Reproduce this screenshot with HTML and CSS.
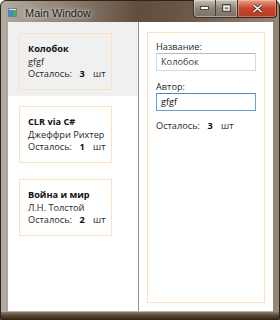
FILE: index.html
```html
<!DOCTYPE html>
<html lang="ru">
<head>
    <meta charset="UTF-8">
    <meta name="viewport" content="width=device-width, initial-scale=1.0">
    <title>Main Window</title>
    <link rel="stylesheet" href="styles.css">
</head>
<body>
    <div class="window">
        <div class="titlebar">
            <svg class="app-icon" width="9" height="9" viewBox="0 0 9 9">
                <rect x="0.5" y="0.5" width="8" height="8" fill="#e8eef4" stroke="#6f7f90"/>
                <rect x="1" y="2" width="4" height="6" fill="#3a8fd0"/>
                <rect x="5" y="2" width="3" height="6" fill="#5aa84a"/>
            </svg>
            <span class="title">Main Window</span>
            <div class="caption">
                <div class="caption-group">
                    <span class="cbtn">
                        <svg width="9" height="4" viewBox="0 0 9 4"><rect x="0.5" y="0.5" width="8" height="3" fill="#fff" stroke="#4a4a4a"/></svg>
                    </span>
                    <span class="cbtn">
                        <svg width="9" height="8" viewBox="0 0 9 8"><rect x="0.5" y="0.5" width="8" height="7" fill="none" stroke="#4a4a4a"/><rect x="2" y="2.5" width="5" height="3.5" fill="none" stroke="#fff" stroke-width="1.2"/></svg>
                    </span>
                </div>
                <span class="cbtn close">
                    <svg width="11" height="9" viewBox="0 0 11 9"><path d="M1.5 1 L9.5 8 M9.5 1 L1.5 8" stroke="#4a2a22" stroke-width="3"/><path d="M1.5 1 L9.5 8 M9.5 1 L1.5 8" stroke="#fff" stroke-width="1.6"/></svg>
                </span>
            </div>
        </div>
        <div class="client">
            <div class="book-list">
                <div class="item selected">
                    <div class="card">
                        <div class="name">Колобок</div>
                        <div>gfgf</div>
                        <div class="count">Осталось: <b>3</b> шт</div>
                    </div>
                </div>
                <div class="item">
                    <div class="card">
                        <div class="name">CLR via C#</div>
                        <div>Джеффри Рихтер</div>
                        <div class="count">Осталось: <b>1</b> шт</div>
                    </div>
                </div>
                <div class="item">
                    <div class="card">
                        <div class="name">Война и мир</div>
                        <div>Л.Н. Толстой</div>
                        <div class="count">Осталось: <b>2</b> шт</div>
                    </div>
                </div>
            </div>
            <div class="details">
                <div class="panel">
                    <div class="label">Название:</div>
                    <div class="textbox">Колобок</div>
                    <div class="label">Автор:</div>
                    <div class="textbox focused">gfgf</div>
                    <div class="count">Осталось: <b>3</b> шт</div>
                </div>
            </div>
        </div>
    </div>
</body>
</html>
```

FILE: styles.css
```css
body {
    margin: 0;
    font-family: "Open Sans", "Liberation Sans", sans-serif;
    font-size: 9.2px;
    color: #262626;
}
.window {
    width: 280px;
    height: 320px;
    box-sizing: border-box;
    padding: 0 6px 7px 7px;
    display: flex;
    flex-direction: column;
    background: linear-gradient(90deg, #b3aaa1 0%, #8c7d70 25%, #614c3d 50%, #6e5b4c 70%, #958879 100%);
    border: 1px solid #2e2418;
    border-radius: 6px 6px 0 0;
    position: relative;
}
.window::after {
    content: "";
    position: absolute;
    left: 0;
    right: 0;
    bottom: 0;
    height: 7px;
    background: linear-gradient(180deg, #8a7a66, #5a4630 50%, #3a2c1c);
    z-index: 0;
}
.titlebar {
    height: 21px;
    display: flex;
    align-items: center;
    position: relative;
}
.app-icon {
    margin-top: 2px;
}
.title {
    margin-left: 8px;
    margin-top: 2px;
    font-family: "Liberation Sans", sans-serif;
    font-size: 11px;
    color: #1a1a1a;
    text-shadow: 0 0 6px rgba(255, 255, 255, 0.8), 0 0 3px rgba(255, 255, 255, 0.6);
}
.caption {
    position: absolute;
    top: -1px;
    right: -4px;
    display: flex;
}
.caption-group {
    display: flex;
    border: 1px solid #3c342c;
    border-top: none;
    border-radius: 0 0 0 4px;
    background: linear-gradient(180deg, #c9c2ba, #8f8478 50%, #7d7064);
    box-shadow: inset 0 0 0 1px rgba(255, 255, 255, 0.35);
}
.cbtn {
    width: 21px;
    height: 16px;
    display: flex;
    align-items: center;
    justify-content: center;
}
.caption-group .cbtn + .cbtn {
    border-left: 1px solid #4a4036;
}
.cbtn.close {
    width: 38px;
    height: 17px;
    border: 1px solid #3c2018;
    border-top: none;
    border-left: none;
    border-radius: 0 0 4px 0;
    background: linear-gradient(180deg, #e8a18c, #c8452c 50%, #b23a22);
    box-shadow: inset 0 0 0 1px rgba(255, 220, 200, 0.35);
}
.client {
    flex: 1;
    display: flex;
    background: #ffffff;
    border: 1px solid #b9b3ac;
    border-width: 0 0 1px 0;
    position: relative;
    z-index: 1;
}
.book-list {
    width: 132px;
    border-right: 1px solid #8a8f98;
    display: flex;
    flex-direction: column;
}
.item {
    height: 73px;
    box-sizing: border-box;
    padding: 10px 0 0 11px;
}
.item:first-child {
    height: 74px;
    padding-top: 11px;
}
.item.selected {
    background: #f0f0f0;
}
.card {
    width: 93px;
    height: 57px;
    box-sizing: border-box;
    border: 1px solid #fbe0c4;
    padding: 9px 8px 0 8px;
    line-height: 12.5px;
    white-space: nowrap;
}
.name {
    font-weight: bold;
    color: #111;
}
.count b {
    color: #111;
    margin: 0 6px 0 5px;
}
.details {
    flex: 1;
    padding: 10px 8px 8px 8px;
    display: flex;
}
.panel {
    flex: 1;
    border: 1px solid #fbe0c4;
    padding: 8px 8px;
}
.label {
    line-height: 12px;
}
.textbox {
    width: 100px;
    height: 18px;
    box-sizing: border-box;
    border: 1px solid #d7dbe1;
    border-top-color: #b6bac0;
    padding: 0 4px;
    line-height: 16px;
    color: #3a3a3a;
    margin-bottom: 10px;
}
.textbox.focused {
    border-color: #6a9fd4;
    border-top-color: #4f86bf;
    color: #111;
    margin-bottom: 9px;
}
.panel .count {
    line-height: 12px;
}
```
